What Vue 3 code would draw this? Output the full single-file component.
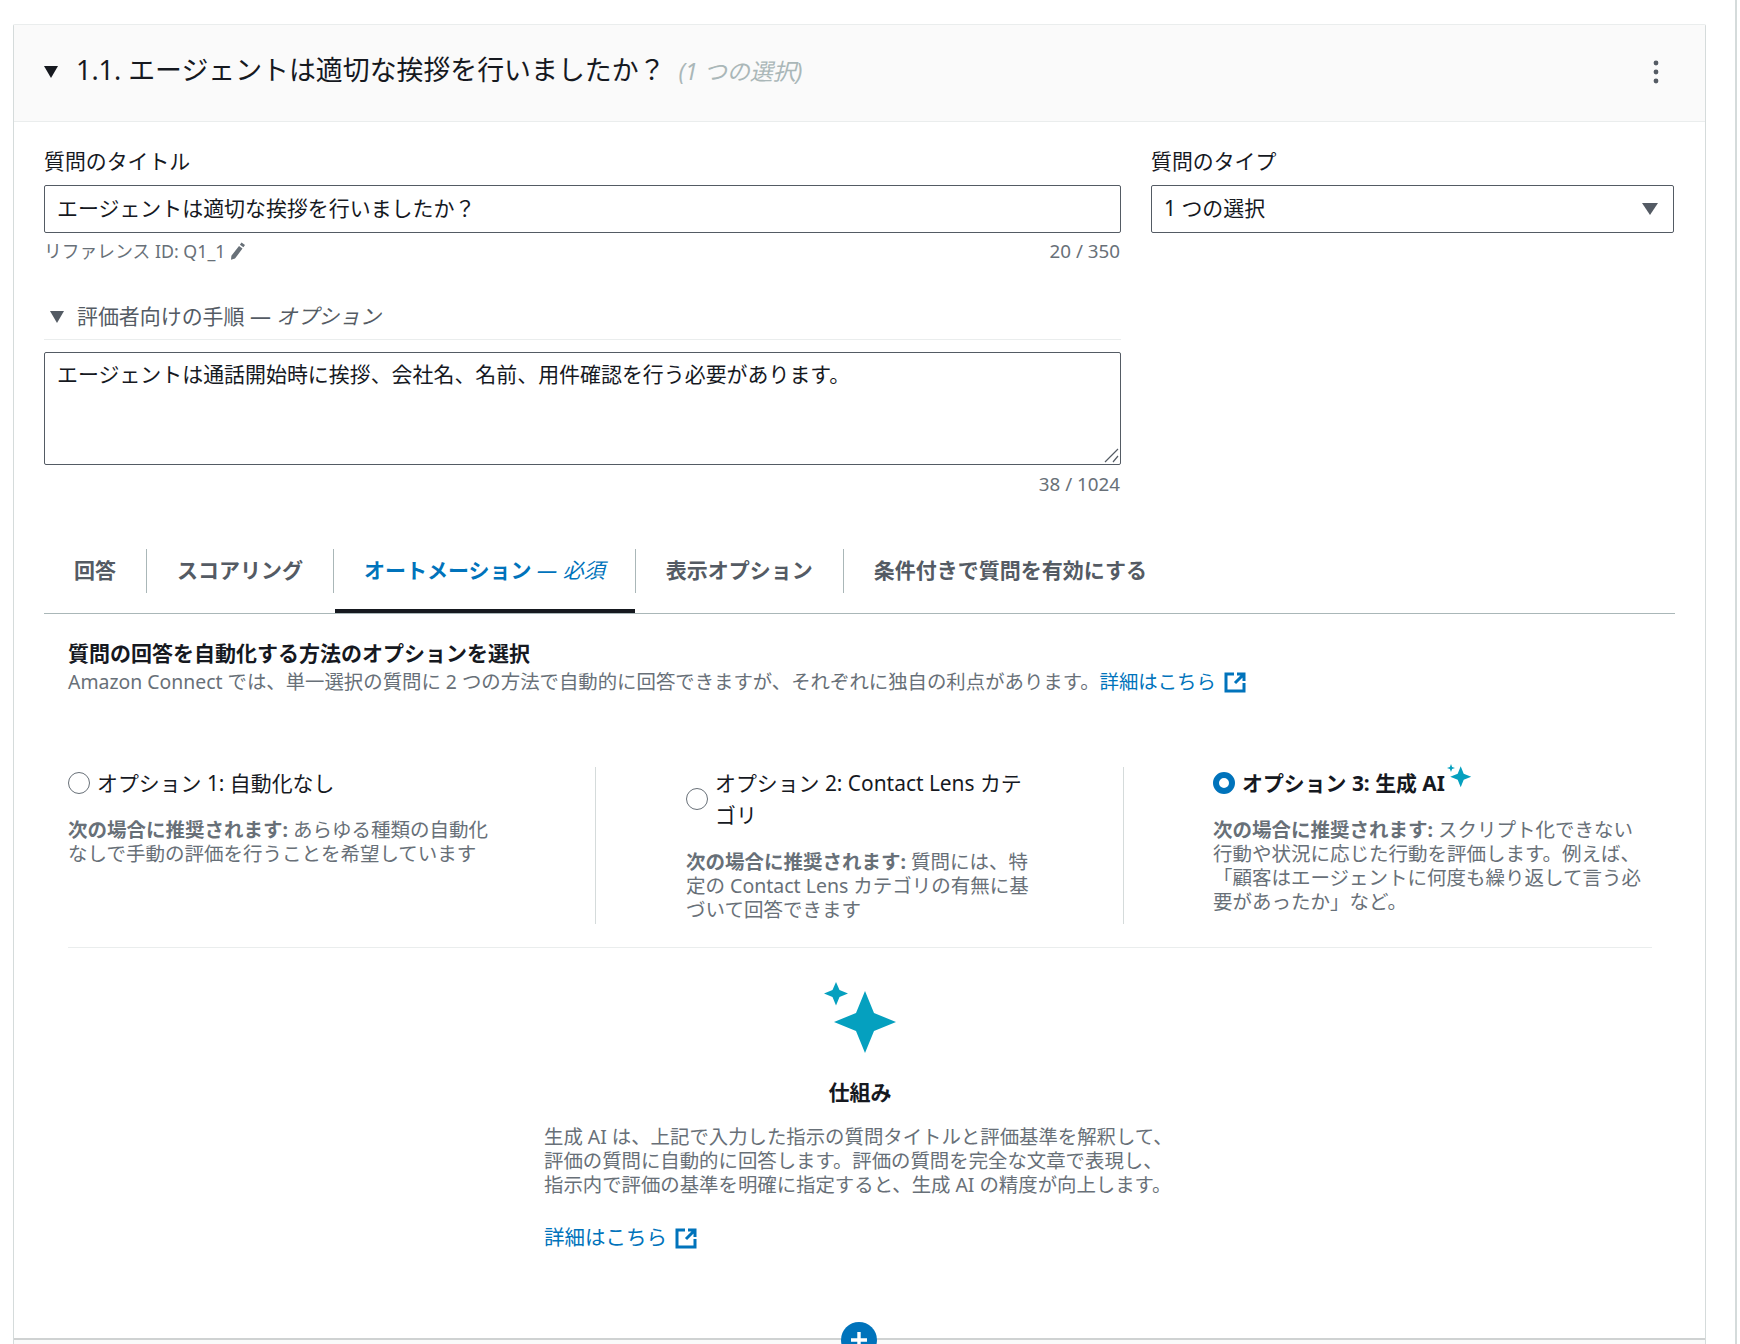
<script setup>
const tabs = [
  { label: '回答' },
  { label: 'スコアリング' },
  { label: 'オートメーション', note: '必須', active: true },
  { label: '表示オプション' },
  { label: '条件付きで質問を有効にする' },
]

const lead = '次の場合に推奨されます:'
</script>

<template>
  <div class="page">
    <section class="card">
      <header class="card-head">
        <svg class="caret" width="14" height="12" viewBox="0 0 14 12"><path d="M0 0h14L7 12z" fill="#16191f" /></svg>
        <h2 class="card-title">1.1. エージェントは適切な挨拶を行いましたか？</h2>
        <span class="card-kind">(1 つの選択)</span>
        <svg class="kebab" width="6" height="24" viewBox="0 0 6 24">
          <circle cx="3" cy="3" r="2.4" />
          <circle cx="3" cy="12" r="2.4" />
          <circle cx="3" cy="21" r="2.4" />
        </svg>
      </header>

      <div class="card-body">
        <div class="form-row">
          <div class="main-col">
            <label class="field-label">質問のタイトル</label>
            <div class="input">エージェントは適切な挨拶を行いましたか？</div>
            <div class="hint-row">
              <span class="ref">
                リファレンス ID: Q1_1
                <svg width="16" height="18" viewBox="0 0 16 18"><path d="M11.5 0.5l3.5 2.6-1.6 2.2-3.5-2.6zM9 4l3.5 2.6L5 16.6l-4 1.2 0.4-4z" fill="#687078" /></svg>
              </span>
              <span class="count">20 / 350</span>
            </div>

            <div class="disclosure">
              <svg width="14" height="12" viewBox="0 0 14 12"><path d="M0 0h14L7 12z" fill="#545b64" /></svg>
              <span>評価者向けの手順 — <i>オプション</i></span>
            </div>
            <div class="textarea">
              エージェントは通話開始時に挨拶、会社名、名前、用件確認を行う必要があります。
              <svg class="grip" width="15" height="15" viewBox="0 0 15 15"><path d="M1 14L14 1M9 14l5-6" stroke="#545b64" fill="none" stroke-width="1.2" /></svg>
            </div>
            <div class="hint-row end"><span class="count">38 / 1024</span></div>
          </div>

          <div class="side-col">
            <label class="field-label">質問のタイプ</label>
            <div class="input select">
              1 つの選択
              <svg width="16" height="12" viewBox="0 0 16 12"><path d="M0 0h16L8 12z" fill="#545b64" /></svg>
            </div>
          </div>
        </div>

        <nav class="tabs">
          <div v-for="tab in tabs" :key="tab.label" class="tab" :class="{ active: tab.active }">
            <span class="tab-text">{{ tab.label }}<em v-if="tab.note"> — {{ tab.note }}</em></span>
          </div>
        </nav>

        <div class="panel">
          <h3 class="panel-title">質問の回答を自動化する方法のオプションを選択</h3>
          <p class="panel-desc">
            Amazon Connect では、単一選択の質問に 2 つの方法で自動的に回答できますが、それぞれに独自の利点があります。<a class="link">詳細はこちら
              <svg class="ext" width="22" height="21" viewBox="0 0 22 21"><path d="M10 2H2v17h18v-8M13 2h7v7M20 2l-9 9" fill="none" stroke="#0073bb" stroke-width="3" /></svg></a>
          </p>

          <div class="options">
            <div class="option">
              <div class="radio-row">
                <span class="radio"></span>
                <span class="radio-label">オプション 1: 自動化なし</span>
              </div>
              <p class="option-desc"><b>{{ lead }}</b> あらゆる種類の自動化なしで手動の評価を行うことを希望しています</p>
            </div>
            <div class="option">
              <div class="radio-row">
                <span class="radio"></span>
                <span class="radio-label">オプション 2: Contact Lens カテゴリ</span>
              </div>
              <p class="option-desc"><b>{{ lead }}</b> 質問には、特定の Contact Lens カテゴリの有無に基づいて回答できます</p>
            </div>
            <div class="option">
              <div class="radio-row">
                <span class="radio checked"></span>
                <span class="radio-label strong">オプション 3: 生成 AI</span>
                <svg class="sparkle-sm" width="25" height="24" viewBox="0 0 25 24">
                  <path d="M13.7 2.2l3 7.5 7.5 3-7.5 3-3 7.5-3-7.5-7.5-3 7.5-3z" fill="#05a0bf" />
                  <path d="M4 0l1.1 2.9L8 4 5.1 5.1 4 8 2.9 5.1 0 4l2.9-1.1z" fill="#05a0bf" />
                </svg>
              </div>
              <p class="option-desc"><b>{{ lead }}</b> スクリプト化できない行動や状況に応じた行動を評価します。例えば、「顧客はエージェントに何度も繰り返して言う必要があったか」など。</p>
            </div>
          </div>

          <div class="how">
            <svg class="sparkle" width="72" height="72" viewBox="0 0 72 72">
              <path d="M41 10l9 22 22 9-22 9-9 22-9-22-22-9 22-9z" fill="#05a0bf" />
              <path d="M12 1l3.500 8 8.500 3.500-8.500 3.500-3.500 8.500-3.500-8.500-8.500-3.500 8.500-3.500z" fill="#05a0bf" />
            </svg>
            <h4 class="how-title">仕組み</h4>
            <p class="how-text">生成 AI は、上記で入力した指示の質問タイトルと評価基準を解釈して、評価の質問に自動的に回答します。評価の質問を完全な文章で表現し、指示内で評価の基準を明確に指定すると、生成 AI の精度が向上します。</p>
            <a class="link how-link">詳細はこちら
              <svg class="ext" width="22" height="21" viewBox="0 0 22 21"><path d="M10 2H2v17h18v-8M13 2h7v7M20 2l-9 9" fill="none" stroke="#0073bb" stroke-width="3" /></svg></a>
          </div>
        </div>
      </div>

      <div class="card-foot">
        <button class="add" aria-label="追加">
          <svg width="18" height="18" viewBox="0 0 18 18"><path d="M9 1v16M1 9h16" stroke="#fff" stroke-width="3.4" /></svg>
        </button>
      </div>
    </section>
  </div>
</template>

<style scoped>
.page {
  height: 1344px;
  overflow: hidden;
  box-sizing: border-box;
  padding: 24px 29px 0 13px;
  border-right: 2px solid #d5dbdb;
  margin-right: 3px;
  font-family: "Noto Sans", "Noto Sans CJK JP", sans-serif;
  color: #16191f;
  background: #fff;
}

.card {
  border: 1px solid #d5dbdb;
  border-top-color: #eaeded;
  border-bottom: 0;
  border-radius: 2px 2px 0 0;
}

.card-head {
  height: 96px;
  display: flex;
  align-items: center;
  padding: 0 46px 0 30px;
  background: #fafafa;
  border-bottom: 1px solid #eaeded;
}

.caret {
  margin: 0 18px 2px 0;
  flex-shrink: 0;
}

.card-title {
  margin: 0 0 6px;
  font-size: 26.9px;
  font-weight: 400;
  line-height: 36px;
}

.card-kind {
  margin: 0 0 6px 13px;
  font-size: 23px;
  font-style: italic;
  color: #aab7b8;
}

.kebab {
  margin: 0 0 2px auto;
  fill: #545b64;
}

.card-body {
  padding: 27px 30px 0;
}

.form-row {
  display: flex;
  gap: 30px;
}

.main-col {
  width: 1077px;
}

.side-col {
  width: 523px;
}

.field-label {
  display: block;
  font-size: 20.9px;
  line-height: 24px;
  margin-bottom: 12px;
}

.input {
  height: 48px;
  box-sizing: border-box;
  border: 1px solid #545b64;
  border-radius: 2px;
  padding: 0 12px 5px;
  display: flex;
  align-items: center;
  font-size: 20.95px;
}

.select {
  justify-content: space-between;
  padding-right: 15px;
}

.select svg {
  margin-top: 5px;
}

.hint-row {
  display: flex;
  justify-content: space-between;
  margin-top: 5px;
  height: 26px;
  line-height: 26px;
  font-size: 17.8px;
  color: #687078;
}

.hint-row.end {
  justify-content: flex-end;
  margin-top: 6px;
}

.count {
  padding-right: 1px;
  font-size: 18.8px;
}

.ref {
  display: flex;
  align-items: center;
  gap: 5px;
}

.disclosure {
  display: flex;
  align-items: center;
  gap: 13px;
  height: 46px;
  margin-top: 30px;
  padding: 0 0 3px 6px;
  box-sizing: border-box;
  border-bottom: 1px solid #eaeded;
  font-size: 20.95px;
  color: #545b64;
}

.disclosure svg {
  margin-top: 3px;
}

.textarea {
  position: relative;
  height: 113px;
  margin-top: 12px;
  box-sizing: border-box;
  border: 1px solid #545b64;
  border-radius: 2px;
  padding: 7px 12px;
  font-size: 20.95px;
  line-height: 28px;
}

.grip {
  position: absolute;
  right: 1px;
  bottom: 1px;
}

.tabs {
  display: flex;
  height: 64px;
  margin-top: 52px;
  border-bottom: 1px solid #aab7b8;
}

.tab {
  position: relative;
  height: 44px;
  padding: 0 30px 5px;
  box-sizing: border-box;
  display: flex;
  align-items: center;
  font-size: 21px;
  font-weight: 700;
  color: #545b64;
  border-right: 1px solid #aab7b8;
}

.tab:last-child {
  border-right: 0;
}

.tab.active {
  color: #0073bb;
}

.tab.active em {
  font-weight: 400;
}

.tab.active::after {
  content: "";
  position: absolute;
  left: 1px;
  right: 0;
  top: 60px;
  height: 4px;
  background: #16191f;
}

.panel {
  padding: 0 23px 0 24px;
}

.panel-title {
  margin: 25px 0 0;
  font-size: 21px;
  font-weight: 700;
  line-height: 28px;
}

.panel-desc {
  margin: 0;
  font-size: 19.4px;
  line-height: 30px;
  color: #687078;
}

.link {
  color: #0073bb;
}

.ext {
  vertical-align: -4px;
  margin-left: 3px;
}

.options {
  display: grid;
  grid-template-columns: 527px 528px 1fr;
  margin-top: 70px;
  padding-bottom: 23px;
  border-bottom: 1px solid #eaeded;
}

.option {
  height: 157px;
  border-left: 1px solid #d5dbdb;
}

.option:nth-child(1) {
  padding-right: 96px;
  border-left: 0;
}

.option:nth-child(2) {
  padding: 0 92px 0 90px;
}

.option:nth-child(3) {
  padding: 0 8px 0 89px;
}

.radio-row {
  display: flex;
  align-items: center;
  gap: 7px;
}

.radio {
  width: 22px;
  height: 22px;
  box-sizing: border-box;
  border: 1.5px solid #687078;
  border-radius: 50%;
  flex-shrink: 0;
}

.radio.checked {
  border: 6px solid #0073bb;
}

.radio-label {
  font-size: 20.9px;
  line-height: 32px;
}

.strong {
  font-weight: 700;
}

.sparkle-sm {
  margin: -14px 0 0 -5px;
}

.option-desc {
  margin: 19px 0 0;
  font-size: 19.5px;
  line-height: 24px;
  color: #687078;
}

.how {
  width: 632px;
  margin: 33px auto 0;
}

.sparkle {
  display: block;
  margin-left: 280px;
}

.how-title {
  margin: 25px 0 0;
  text-align: center;
  font-size: 21px;
  font-weight: 700;
  line-height: 28px;
}

.how-text {
  margin: 19px -2px 0 0;
  font-size: 19.4px;
  line-height: 24px;
  color: #687078;
}

.how-link {
  display: block;
  margin-top: 24px;
  font-size: 20.5px;
}

.card-foot {
  position: relative;
  margin-top: 87px;
  border-top: 2px solid #cfd2d2;
  height: 10px;
  background: #fafafa;
}

.add {
  position: absolute;
  left: 827px;
  top: -18px;
  width: 36px;
  height: 36px;
  padding: 0;
  border: 0;
  border-radius: 50%;
  background: #0073bb;
  display: flex;
  align-items: center;
  justify-content: center;
}
</style>
